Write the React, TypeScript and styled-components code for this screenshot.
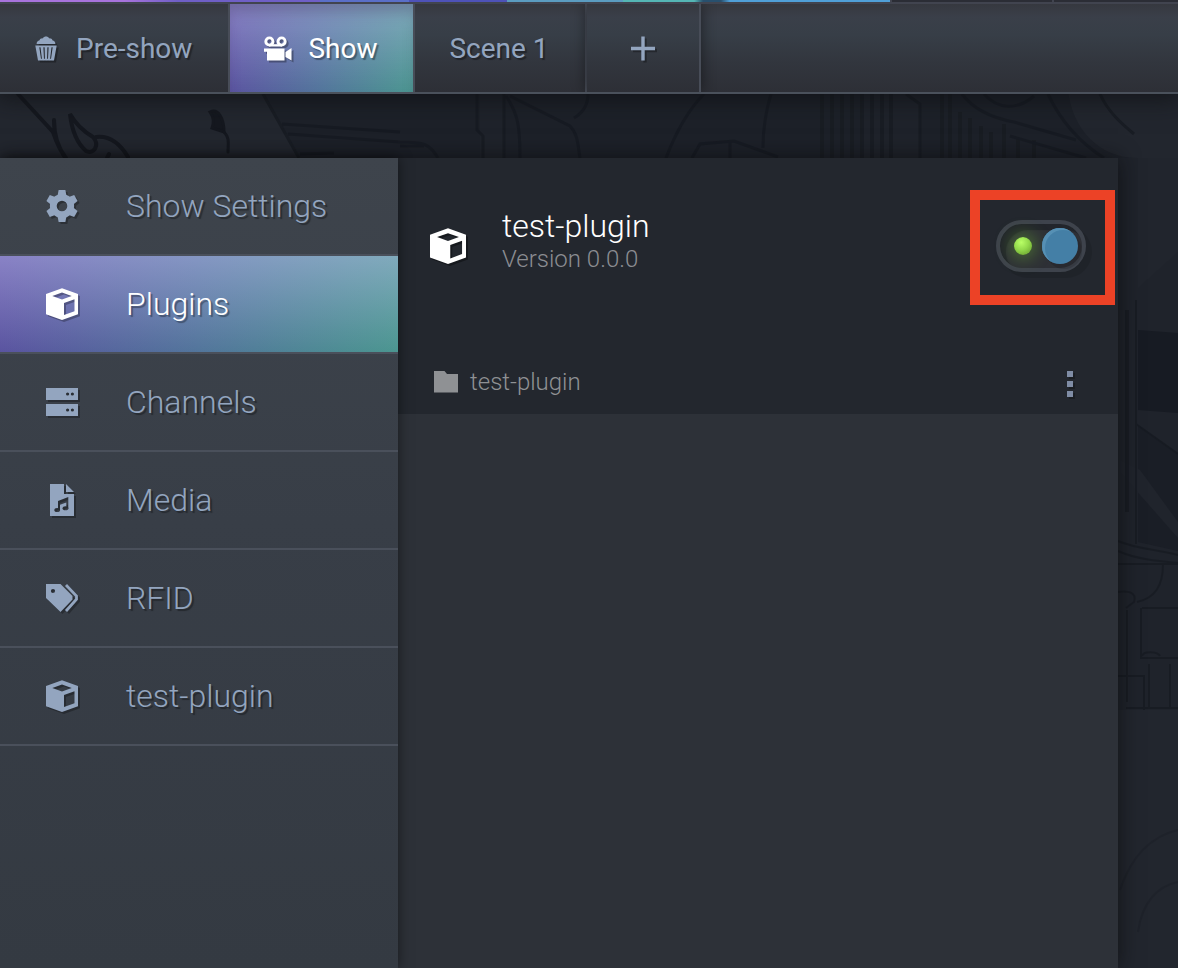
import React, { useState } from 'react';
import styled, { createGlobalStyle, css } from 'styled-components';

const GlobalStyle = createGlobalStyle`
  *, *::before, *::after { box-sizing: border-box; }
  body {
    margin: 0;
    background: #1d2129;
    font-family: Roboto, "Liberation Sans", sans-serif;
    font-weight: 300;
    color: #93a5bf;
  }
  button, input { font: inherit; color: inherit; }
`;

const activeFill = css`
  background:
    linear-gradient(rgba(208, 200, 255, 0.4), rgba(208, 200, 255, 0)),
    linear-gradient(to right, #5a54a0, #52759b 50%, #4b9690);
`;

const Page = styled.div`
  position: relative;
  isolation: isolate;
  min-height: 100vh;
  display: flex;
  flex-direction: column;
  overflow: hidden;
`;

const Backdrop = styled.svg`
  position: absolute;
  inset: 0;
  width: 100%;
  height: 100%;
  z-index: -1;
`;

const ThumbStrip = styled.div`
  position: relative;
  z-index: 1;
  display: flex;
  gap: 2px;
  height: 2px;
  background: #41444f;
`;

const Thumb = styled.div<{ $grow: number; $fill: string }>`
  flex: ${(p) => p.$grow} 1 0;
  background: ${(p) => p.$fill};
`;

const TabBar = styled.nav`
  display: flex;
  height: 92px;
  border-top: 2px solid #41444f;
  border-bottom: 2px solid #4a515b;
  background: linear-gradient(#36383f, #3a3f49 15%, #373e47 35%, #32363e 65%, #2d2f36);
  box-shadow: 0 0 24px 4px rgba(14, 15, 17, 0.75);
`;

const Tab = styled.button<{ $active?: boolean; $raised?: boolean }>`
  display: flex;
  align-items: center;
  gap: 16px;
  padding: 2px 36px 0 34px;
  border: 0;
  border-right: 2px solid #484d58;
  background: none;
  font-size: 28px;
  font-weight: 400;
  line-height: 32px;
  text-shadow: 2px 2px 1px rgba(0, 0, 0, 0.35);
  cursor: pointer;
  svg { filter: drop-shadow(2px 2px 0 rgba(0, 0, 0, 0.3)); }
  ${(p) => p.$active && css`
    ${activeFill}
    background-clip: padding-box;
    color: #fff;
    box-shadow: inset 0 12px 14px -4px rgba(60, 50, 90, 0.35);
  `}
  ${(p) => p.$raised && css`
    padding: 2px 44px 0;
    box-shadow: 0 0 14px rgba(0, 0, 0, 0.5);
    clip-path: inset(0 -16px);
  `}
`;

const Workspace = styled.main`
  flex: 1;
  display: flex;
  margin: 64px 60px 0 0;
  box-shadow: 0 0 20px rgba(10, 10, 12, 0.7);
`;

const Sidebar = styled.nav`
  z-index: 1;
  flex: 0 0 398px;
  background: linear-gradient(#3e444c, #383e47 45%, #343a42);
  box-shadow: 0 0 12px rgba(0, 0, 0, 0.5);
`;

const MenuLink = styled.a<{ $active?: boolean }>`
  display: flex;
  align-items: center;
  gap: 46px;
  height: 98px;
  padding: 0 44px;
  border-bottom: 2px solid #4a505b;
  color: inherit;
  font-size: 32px;
  line-height: 40px;
  text-decoration: none;
  text-shadow: 2px 2px 1px rgba(0, 0, 0, 0.35);
  svg { flex: 0 0 36px; filter: drop-shadow(2px 2px 0 rgba(0, 0, 0, 0.27)); }
  ${(p) => p.$active && css`
    ${activeFill}
    color: #fff;
    background-clip: padding-box;
  `}
`;

const Content = styled.section`
  flex: 1;
  min-width: 0;
  background: #2d3138;
`;

const PluginCard = styled.article`
  position: relative;
  height: 256px;
  display: flex;
  flex-direction: column;
  justify-content: space-between;
  padding: 48px 32px 14px;
  background: #23272e;
`;

const PluginHeader = styled.header`
  display: flex;
  align-items: center;
  gap: 36px;
  min-height: 80px;
  color: #fff;
  > svg { filter: drop-shadow(2px 2px 0 rgba(0, 0, 0, 0.35)); }
`;

const PluginTitle = styled.div`
  flex: 1;
  align-self: flex-start;
`;

const PluginName = styled.h1`
  margin: 0;
  font-size: 32px;
  font-weight: 300;
  line-height: 40px;
`;

const Version = styled.p`
  margin: 0;
  font-size: 24px;
  line-height: 26px;
  color: #8b8d92;
`;

const Toggle = styled.input`
  appearance: none;
  display: flex;
  align-items: center;
  justify-content: space-between;
  width: 90px;
  height: 52px;
  margin: 0;
  padding: 0 4px 0 14px;
  border: 4px solid #3e434c;
  border-radius: 26px;
  background: #2e3036;
  box-shadow: inset 6px 6px 1px #22252b, 6px 6px 0 rgba(0, 0, 0, 0.1);
  cursor: pointer;
  &::before {
    content: '';
    width: 18px;
    height: 18px;
    border-radius: 50%;
    background: radial-gradient(circle at 40% 30%, #b9ff66, #93d94b 45%, #5f9428);
    box-shadow: 0 0 16px 4px rgba(106, 178, 50, 0.45);
  }
  &::after {
    content: '';
    width: 36px;
    height: 36px;
    border-radius: 50%;
    background: #447fa6;
    box-shadow: inset 3px 2px 0 #5690b4, 4px 5px 0 rgba(0, 0, 0, 0.13);
  }
  &:not(:checked) { flex-direction: row-reverse; padding: 0 14px 0 4px; }
  &:not(:checked)::before { background: #3e434c; box-shadow: none; }
`;

const Highlight = styled.div`
  position: absolute;
  top: 32px;
  right: 3px;
  width: 145px;
  height: 115px;
  border: 10px solid #ec4226;
  pointer-events: none;
`;

const FolderRow = styled.div`
  display: flex;
  align-items: center;
  gap: 12px;
  padding: 0 4px;
  font-size: 24px;
  line-height: 36px;
  color: #8f9194;
`;

const FolderName = styled.span`
  flex: 1;
`;

const MenuButton = styled.button`
  display: flex;
  justify-content: center;
  width: 24px;
  padding: 4px 0 0;
  border: 0;
  background: none;
  color: #7f8ca5;
  cursor: pointer;
  svg { filter: drop-shadow(2px 2px 0 rgba(0, 0, 0, 0.25)); }
`;

const PopcornIcon = () => (
  <svg width="26" height="26" viewBox="0 0 26 26" fill="currentColor" aria-hidden="true">
    <path d="M2.600 8c0-2 1.200-3.400 3-3.700C6 2.900 7.200 2.200 8.700 2.400 9.500 1 10.700.6 12 .6s2.500.4 3.300 1.800c1.500-.2 2.700.5 3.100 1.900 1.800.3 3 1.700 3 3.700Z" />
    <path fillRule="evenodd" d="M1.300 9.400h21.400L20 24.500H4ZM5.300 11.200l1.700 11.600h.9L6.500 11.200Zm4.100 0 .6 11.600h.9l-.3-11.600Zm4 0-.3 11.600h.9l.6-11.600Zm4.100 0-1.400 11.600h.9l1.700-11.600Z" />
  </svg>
);

const CameraIcon = () => (
  <svg width="28" height="26" viewBox="0 0 28 26" fill="currentColor" aria-hidden="true">
    <g fill="none" stroke="currentColor" strokeWidth="2.900">
      <circle cx="5.400" cy="5.500" r="3.600" />
      <circle cx="17.600" cy="5.500" r="3.600" />
    </g>
    <path d="M5 8.200h13v2.300H5Z" />
    <path d="M0 12.500h20.500V24.500H3v-8.700H0Z" />
    <path d="M21.500 16 27.500 12v12.500L21.500 21Z" />
  </svg>
);

const GearIcon = () => (
  <svg width="36" height="36" viewBox="-2 -2 36 36" fill="currentColor" aria-hidden="true">
    <circle cx="16" cy="16" r="8.700" fill="none" stroke="currentColor" strokeWidth="6.800" />
    {[0, 60, 120, 180, 240, 300].map((angle) => (
      <path key={angle} d="M12.600 0h6.800l1 5.500V7.500h-8.800V5.500Z" transform={`rotate(${angle} 16 16)`} />
    ))}
  </svg>
);

const CubeIcon = ({ pad = 2 }: { pad?: number }) => (
  <svg width="36" height="36" viewBox={`${-pad} ${-pad} ${32 + pad * 2} ${32 + pad * 2}`} fill="currentColor" aria-hidden="true">
    <path fillRule="evenodd" d="M16 .3 32 6v20.300L16 32 0 26.300V6ZM6.300 8 16 11.600 25.700 8 16 4.600ZM18 15v12l10.500-3.800V11.300Z" />
  </svg>
);

const ServerIcon = () => (
  <svg width="36" height="36" viewBox="-2 -2 36 36" fill="currentColor" aria-hidden="true">
    <path
      fillRule="evenodd"
      d="M0 2h32v12H0ZM0 18h32v12H0ZM20 8a1.600 1.600 0 1 0 3.200 0 1.600 1.600 0 1 0-3.200 0Zm4.800 0A1.600 1.600 0 1 0 28 8a1.600 1.600 0 1 0-3.200 0ZM20 24a1.600 1.600 0 1 0 3.200 0 1.600 1.600 0 1 0-3.200 0Zm4.800 0a1.600 1.600 0 1 0 3.200 0 1.600 1.600 0 1 0-3.200 0Z"
    />
  </svg>
);

const MusicFileIcon = () => (
  <svg width="36" height="36" viewBox="-2 -2 36 36" fill="currentColor" aria-hidden="true">
    <mask id="note-cutout">
      <path fill="#fff" d="M4 0h14v10h10v22H4Z" />
      <g fill="#000">
        <path d="M12 17 22.300 13v11.500h-2V18.500L14 20.800v5.500h-2Z" />
        <ellipse cx="11.200" cy="26" rx="2.900" ry="2" />
        <ellipse cx="19.500" cy="24.300" rx="2.900" ry="2" />
      </g>
    </mask>
    <path mask="url(#note-cutout)" d="M4 0h14v10h10v22H4Z" />
    <path d="M20 0l8 8h-8Z" />
  </svg>
);

const TagsIcon = () => (
  <svg width="36" height="36" viewBox="-2 -2 36 36" fill="currentColor" aria-hidden="true">
    <path fillRule="evenodd" d="M0 2h14.500L26.500 14v3.500L14.500 30 0 16ZM4.900 9a2.100 2.100 0 1 0 4.200 0 2.100 2.100 0 1 0-4.200 0Z" />
    <path fill="none" stroke="currentColor" strokeWidth="2.800" d="m20 3 10.500 11v3.300L20 29" />
  </svg>
);

const FolderIcon = () => (
  <svg width="24" height="22" viewBox="0 0 24 22" fill="currentColor" aria-hidden="true">
    <path d="M0 0h10.500L13 3h11v18.500H0Z" />
  </svg>
);

const KebabIcon = () => (
  <svg width="6" height="26" viewBox="0 0 6 26" fill="currentColor" aria-hidden="true">
    <path d="M0 0h6v6H0ZM0 10h6v6H0ZM0 20h6v6H0Z" />
  </svg>
);

const PlusIcon = () => (
  <svg width="24" height="26" viewBox="0 0 24 26" fill="none" stroke="currentColor" strokeWidth="3.400" aria-hidden="true">
    <path d="M12 .500v24M0 12.500h24" />
  </svg>
);

const CityArt = () => (
  <Backdrop viewBox="0 0 1178 968" preserveAspectRatio="xMinYMin slice" aria-hidden="true">
    <path fill="#23272f" d="M0 90h262l40 70H0Z" />
    <path fill="#1f232b" d="M480 90h24v70h-24ZM862 90h58v70h-58ZM1118 158h60v810h-60Z" />
    <path fill="#22262e" d="M1068 90h110v68h-40c-40 0-66-30-70-68ZM1118 710h60v258h-60Z" />
    <path fill="#21252d" d="M1138 158h40v94l-40 36Z" />
    <path fill="#171b23" d="M1138 330l40 3v80l-40-3Z" />
    <path fill="#1a1e26" d="M1138 425l40 28v98l-40-9Z" />
    <path fill="#20242c" d="M1120 460l20 10 38 52v16l-58-66Z" />
    <g fill="none" stroke="#15181f" strokeWidth="3" strokeLinecap="round">
      <path strokeWidth="4" d="M18 94 53 132c4 12 8 20 14 28M54 120c0 14 4 28 12 38" />
      <path strokeWidth="4" d="M70 114c2 18 8 30 16 37 8 4 14-6 7-14-10-6-18-14-23-23ZM96 137c16-2 26 10 32 20M107 158l2-4" />
      <path fill="#15181f" d="M210 112c8-4 14 6 14 20l-12-4c2-6 2-10-2-16Z" />
      <path d="M224 132c6 6 4 12 4 20" />
    </g>
    <g fill="none" stroke="#161a21" strokeWidth="3" opacity=".75">
      <path d="M263 94l36 64M282 124l118 8M288 134l112 8c24 0 30 2 38 16M300 154l34-1M400 146h24" />
      <path d="M477 94v36l6 6v24M504 94v66M506 96c12 18 14 30 14 62M510 96l60 30c8 8 8 20 10 32M588 94c0 10-4 18-14 24M704 94c-16 16-28 38-38 64M771 94c-6 20-8 36-8 54M692 158l8-14 34-3 44 16M730 142v16" />
      <path strokeWidth="4" opacity=".8" d="M822 94v64M832 94v64M842 94v64M852 94v64M862 94v64M872 94v64M882 94v64M891 94v64M942 94v64M950 94v64M960 112v46M970 118v40M981 126v32M991 132v26M1004 124v34M1018 138v20M1034 140v18" />
      <path d="M906 94l14 10v54M962 94c12 16 30 24 52 28l62 18M984 94c14 16 34 16 50 2M1010 136l76 22M1048 94c14 30 34 50 56 64M1100 94c8 18 22 30 34 40" />
    </g>
    <g fill="none" stroke="#161a21" strokeWidth="2" opacity=".7">
      <path strokeWidth="4" d="M1127 310v202" />
      <path d="M1136 300v244M1136 424l42 30M1118 541c18 8 38 8 60 14M1118 551c18 8 38 10 60 12M1118 564h60M1163 564c0 22-8 34-26 38M1118 592c16-2 18 4 16 10l-8 6M1127 610v92M1142 608h36M1141 608v50M1140 658h38M1118 676h26v34M1149 664v44M1170 664v44M1126 708h52M1142 656c2-6 16-4 18 0" />
      <path opacity=".4" d="M1178 830c-34 8-50 36-58 60M1178 882c-20 4-36 20-40 50" />
    </g>
  </Backdrop>
);

const menu = [
  { label: 'Show Settings', Icon: GearIcon },
  { label: 'Plugins', Icon: CubeIcon },
  { label: 'Channels', Icon: ServerIcon },
  { label: 'Media', Icon: MusicFileIcon },
  { label: 'RFID', Icon: TagsIcon },
  { label: 'test-plugin', Icon: CubeIcon },
];

export default function App() {
  const [enabled, setEnabled] = useState(true);
  return (
    <>
      <GlobalStyle />
      <Page>
        <CityArt />
        <ThumbStrip>
          <Thumb $grow={890} $fill="linear-gradient(to right, #a873dc 0 14%, #6f5fc6 20% 36%, #5a6fc8 36% 46%, #4e52b8 46% 57%, #5b9cc0 57% 70%, #55b6b4 70% 78%, #28506e 79% 81%, #50a0d8 82%)" />
          <Thumb $grow={160} $fill="#2b2d35" />
          <Thumb $grow={124} $fill="#2b2d35" />
        </ThumbStrip>
        <TabBar aria-label="Scenes">
          <Tab><PopcornIcon />Pre-show</Tab>
          <Tab $active><CameraIcon />Show</Tab>
          <Tab>Scene 1</Tab>
          <Tab $raised aria-label="Add scene"><PlusIcon /></Tab>
        </TabBar>
        <Workspace>
          <Sidebar aria-label="Show sections">
            {menu.map(({ label, Icon }) => (
              <MenuLink key={label} href="#" $active={label === 'Plugins'}>
                <Icon />
                {label}
              </MenuLink>
            ))}
          </Sidebar>
          <Content>
            <PluginCard>
              <PluginHeader>
                <CubeIcon pad={0} />
                <PluginTitle>
                  <PluginName>test-plugin</PluginName>
                  <Version>Version 0.0.0</Version>
                </PluginTitle>
                <Toggle
                  type="checkbox"
                  role="switch"
                  aria-label="Enable test-plugin"
                  checked={enabled}
                  onChange={(e) => setEnabled(e.target.checked)}
                />
              </PluginHeader>
              <Highlight />
              <FolderRow>
                <FolderIcon />
                <FolderName>test-plugin</FolderName>
                <MenuButton aria-label="Plugin actions"><KebabIcon /></MenuButton>
              </FolderRow>
            </PluginCard>
          </Content>
        </Workspace>
      </Page>
    </>
  );
}
